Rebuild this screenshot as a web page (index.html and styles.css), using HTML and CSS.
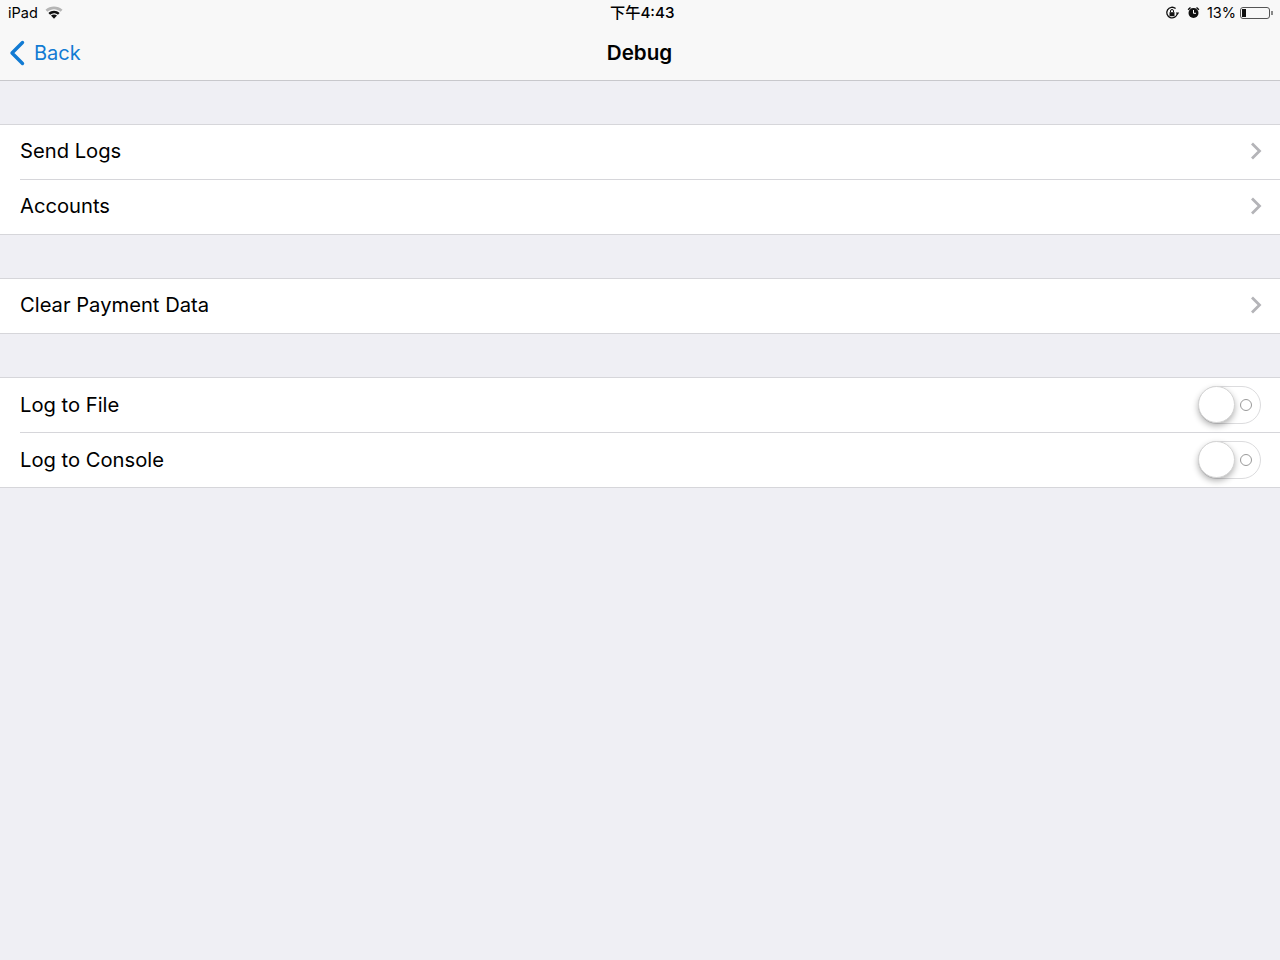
FILE: index.html
```html
<!DOCTYPE html>
<html>
<head>
    <title>Debug</title>
    <link rel="stylesheet" href="styles.css">
</head>
<body>
    <div class="header">
        <div class="status-bar">
            <div class="status-left">
                <span>iPad</span>
                <svg class="wifi" width="18" height="13" viewBox="0 0 18 13">
                    <path d="M0.5 3.8C5.4 -0.6 12.6 -0.6 17.5 3.8L15.6 5.8C11.6 2.4 6.4 2.4 2.4 5.8Z" fill="#b5b5b5"/>
                    <path d="M3.4 6.9C6.7 4 11.3 4 14.6 6.9L12.9 8.7C10.5 6.7 7.5 6.7 5.1 8.7Z" fill="#111"/>
                    <path d="M6 9.6C7.8 8.2 10.2 8.2 12 9.6L9 12.8Z" fill="#111"/>
                </svg>
            </div>
            <div class="status-time">下午4:43</div>
            <div class="status-right">
                <svg width="15" height="14" viewBox="0 0 15 14">
                    <path d="M12.3 7.5A5.3 5.3 0 1 1 10.6 2.6" fill="none" stroke="#111" stroke-width="1.3"/>
                    <path d="M10.8 6.6H14.2L12.5 9Z" fill="#111"/>
                    <rect x="4.5" y="6.2" width="5" height="4" fill="#111"/>
                    <path d="M5.5 6.2V5A1.5 1.5 0 0 1 8.5 5V6.2" fill="none" stroke="#111" stroke-width="1"/>
                </svg>
                <svg class="alarm" width="13" height="13" viewBox="0 0 13 13">
                    <circle cx="6.5" cy="7" r="5" fill="#111"/>
                    <path d="M0.6 3.2L3 0.9L4 1.9L1.6 4.3ZM12.4 3.2L10 0.9L9 1.9L11.4 4.3Z" fill="#111"/>
                    <path d="M6.5 4V7.3H9" fill="none" stroke="#fff" stroke-width="1"/>
                </svg>
                <span class="battery-pct">13%</span>
                <div class="battery"><div class="battery-level"></div></div>
                <div class="battery-tip"></div>
            </div>
        </div>
        <div class="nav-bar">
            <a class="back">
                <svg width="17" height="26" viewBox="0 0 17 26">
                    <path d="M14.5 2.5L4 13L14.5 23.5" fill="none" stroke="#127bd3" stroke-width="3.4" stroke-linecap="round" stroke-linejoin="round"/>
                </svg>
                <span>Back</span>
            </a>
            <div class="nav-title">Debug</div>
        </div>
    </div>

    <div class="group">
        <div class="row">
            <span>Send Logs</span>
            <svg class="chevron" width="12" height="18" viewBox="0 0 12 18"><path d="M2 1.5L9.5 9L2 16.5" fill="none" stroke="#b4b4b8" stroke-width="2.8"/></svg>
        </div>
        <div class="row">
            <span>Accounts</span>
            <svg class="chevron" width="12" height="18" viewBox="0 0 12 18"><path d="M2 1.5L9.5 9L2 16.5" fill="none" stroke="#b4b4b8" stroke-width="2.8"/></svg>
        </div>
    </div>

    <div class="group">
        <div class="row">
            <span>Clear Payment Data</span>
            <svg class="chevron" width="12" height="18" viewBox="0 0 12 18"><path d="M2 1.5L9.5 9L2 16.5" fill="none" stroke="#b4b4b8" stroke-width="2.8"/></svg>
        </div>
    </div>

    <div class="group switches">
        <div class="row">
            <span>Log to File</span>
            <div class="switch"><div class="knob"></div><div class="off-mark"></div></div>
        </div>
        <div class="row">
            <span>Log to Console</span>
            <div class="switch"><div class="knob"></div><div class="off-mark"></div></div>
        </div>
    </div>
</body>
</html>
```

FILE: styles.css
```css
html, body { margin: 0; padding: 0; }
body { width: 1280px; height: 960px; overflow: hidden; background: #efeff4; color: #000; font-family: Inter, "Noto Sans CJK SC", sans-serif; }

.header { height: 80px; background: #f8f8f8; border-bottom: 1px solid #c8c8cc; }

.status-bar { height: 26px; position: relative; display: flex; justify-content: space-between; align-items: center; padding: 0 9px 0 8px; font-size: 14.5px; }
.status-left { display: flex; align-items: center; gap: 7px; margin-top: -1px; }
.status-time { position: absolute; left: 610px; top: 3px; font-size: 15.2px; font-weight: 500; line-height: 20px; }
.status-right { display: flex; align-items: center; margin-top: -1px; }
.alarm { margin-left: 7px; }
.battery-pct { margin-left: 7px; }
.battery { width: 30px; height: 12px; margin-left: 4px; border: 1px solid #555; border-radius: 3px; padding: 1px; box-sizing: border-box; }
.battery-level { width: 4px; height: 100%; background: #111; }
.battery-tip { width: 2px; height: 4px; background: #888; margin-left: 1px; margin-right: -2px; }

.nav-bar { height: 54px; position: relative; display: flex; align-items: center; }
.back { display: flex; align-items: center; gap: 9px; margin-left: 8px; color: #127bd3; font-size: 20px; }
.nav-title { position: absolute; left: -1px; right: 0; top: 14px; text-align: center; font-size: 20.6px; font-weight: 600; line-height: 26px; }

.group { margin-top: 43px; background: #fff; border-top: 1px solid #d6d6da; border-bottom: 1px solid #d6d6da; }

.row { height: 54px; margin-left: 20px; padding-right: 18px; display: flex; justify-content: space-between; align-items: center; font-size: 20.2px; }
.row span { margin-top: -4px; }
.switches .row span { margin-top: -2px; }
.row + .row { border-top: 1px solid #d6d6da; }

.chevron { display: block; margin-top: -2px; }

.switch { position: relative; width: 61px; height: 36px; margin-right: 1px; margin-top: -1px; border: 1px solid #dcdcde; border-radius: 19px; background: #fff; }
.knob { position: absolute; left: -1px; top: -1px; width: 35px; height: 35px; border-radius: 50%; background: #fff; border: 1px solid #d4d4d4; box-shadow: 0 3px 6px rgba(0, 0, 0, 0.3); }
.off-mark { position: absolute; right: 8px; top: 12px; width: 10px; height: 10px; border: 1.5px solid #999; border-radius: 50%; }
```
